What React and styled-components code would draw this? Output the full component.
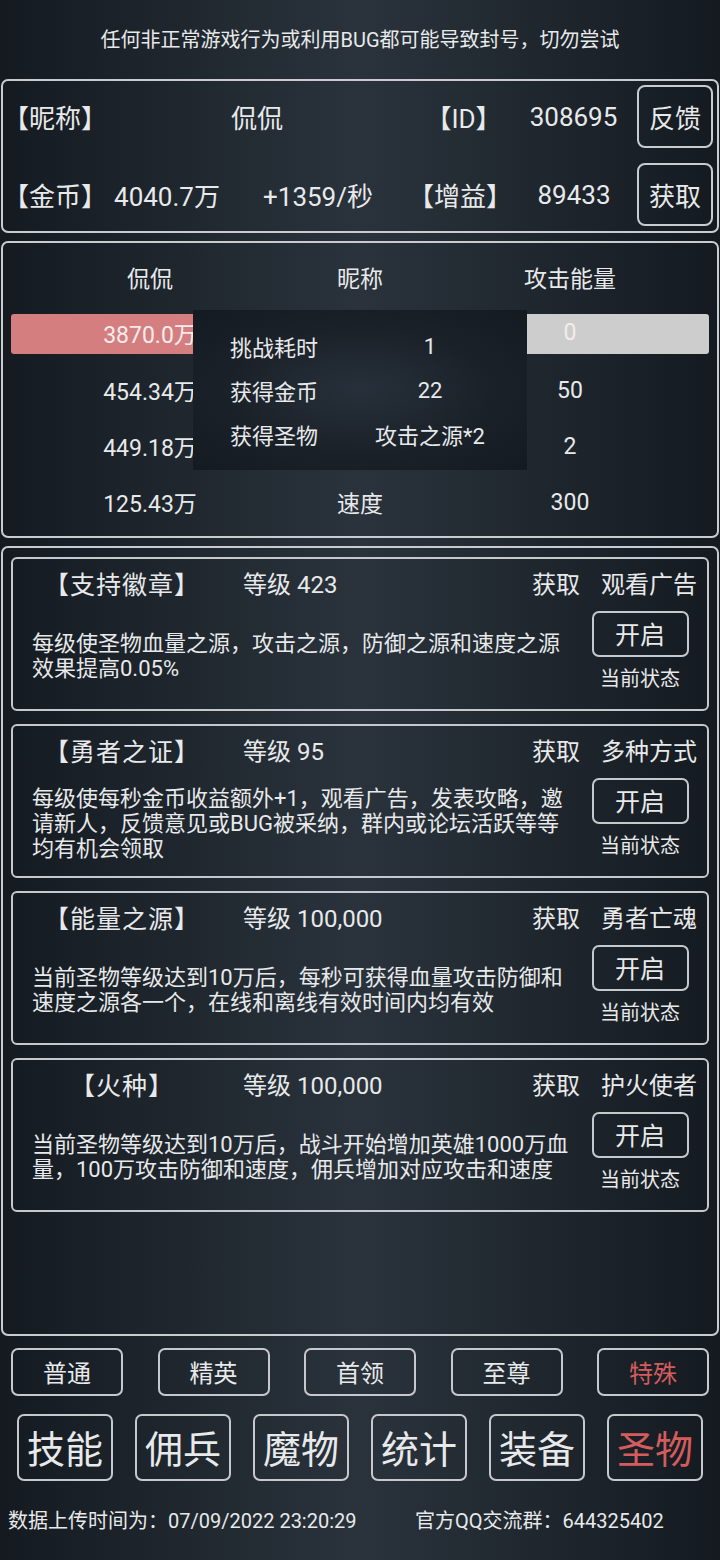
import React from "react";
import styled, { createGlobalStyle } from "styled-components";

const GlobalStyle = createGlobalStyle`
  html, body {
    margin: 0;
    padding: 0;
    background: #161c23;
  }
  * {
    box-sizing: border-box;
  }
`;

const Page = styled.div`
  width: 720px;
  min-height: 1560px;
  background: linear-gradient(to right, #141a20 0%, #2a333c 50%, #141a20 100%);
  color: #e8e9ea;
  font-family: Roboto, "Noto Sans CJK SC", sans-serif;
  display: flex;
  flex-direction: column;
`;

const Notice = styled.div`
  height: 79px;
  display: flex;
  align-items: center;
  justify-content: center;
  font-size: 20px;
  padding-bottom: 2px;
`;

const Panel = styled.div`
  position: relative;
  margin: 0 1px;
  border: 2px solid #c8ccd0;
  border-radius: 7px;
`;

const InfoPanel = styled(Panel)`
  padding: 4px 4px 5px 0;
  display: flex;
  flex-direction: column;
  gap: 15px;
`;

const InfoRow = styled.div`
  display: grid;
  grid-template-columns: ${({ $cols }) => $cols};
  align-items: center;
  height: 63px;
  font-size: 26px;
`;

const Cell = styled.div`
  text-align: center;
  white-space: nowrap;
`;

const SideButton = styled.div`
  grid-column: -2;
  justify-self: end;
  width: 76px;
  height: 63px;
  border: 2px solid #c8ccd0;
  border-radius: 8px;
  display: flex;
  align-items: center;
  justify-content: center;
  font-size: 26px;
`;

const BattlePanel = styled(Panel)`
  margin-top: 8px;
  padding: 7px 0 6px;
`;

const StatRow = styled.div`
  display: grid;
  grid-template-columns: 210px 210px 210px;
  align-items: center;
  height: 56px;
  padding-left: 42px;
  padding-bottom: ${({ $lift }) => ($lift ? 3 : 0)}px;
  font-size: 23px;
`;

const BarRow = styled.div`
  height: 56px;
  display: flex;
  align-items: center;
  padding: 0 8px;
`;

const Bar = styled.div`
  flex: 1;
  height: 40px;
  border-radius: 3px;
  background: linear-gradient(to right, #d47e80 0 50%, #cdcdcd 50% 100%);
  display: grid;
  grid-template-columns: 210px 210px 210px;
  align-items: center;
  padding-left: 34px;
  padding-bottom: 3px;
  font-size: 23px;
  color: #f4ecec;
`;

const Popup = styled.div`
  position: absolute;
  top: 67px;
  left: 190px;
  width: 334px;
  height: 160px;
  padding: 14px 0 0 37px;
  background: radial-gradient(ellipse at center, #27303a 0%, #1a2129 55%, #141a20 100%);
  display: grid;
  grid-template-columns: 135px 130px;
  grid-auto-rows: 44px;
  align-items: center;
  font-size: 22px;
`;

const PopupValue = styled.div`
  text-align: center;
  white-space: nowrap;
`;

const RelicPanel = styled(Panel)`
  margin-top: 8px;
  height: 790px;
  padding: 9px 8px;
  display: flex;
  flex-direction: column;
  gap: 13px;
`;

const Card = styled.div`
  height: 154px;
  border: 2px solid #c5c9cd;
  border-radius: 6px;
  display: grid;
  grid-template-columns: 572px 110px;
  grid-template-rows: 52px 90px;
  padding-right: 12px;
`;

const CardHead = styled.div`
  grid-column: 1 / -1;
  display: flex;
  align-items: center;
  padding-bottom: 5px;
  margin-right: -2px;
  font-size: 24px;
  white-space: nowrap;
`;

const CardTitle = styled.div`
  width: 218px;
  text-align: center;
  font-size: 25px;
  letter-spacing: 1px;
`;

const Level = styled.div`
  margin-left: 12px;
  flex: 1;
`;

const Source = styled.div`
  margin-left: 21px;
`;

const Desc = styled.div`
  align-self: center;
  padding-left: 19px;
  width: 559px;
  font-size: 22px;
  line-height: 25px;
`;

const Side = styled.div`
  display: flex;
  flex-direction: column;
  align-items: center;
`;

const OpenButton = styled.div`
  width: 97px;
  height: 46px;
  border: 2px solid #c5c9cd;
  border-radius: 7px;
  display: flex;
  align-items: center;
  justify-content: center;
  padding-bottom: 2px;
  font-size: 25px;
`;

const Status = styled.div`
  margin-top: 10px;
  font-size: 20px;
  line-height: 24px;
`;

const TabRow = styled.div`
  display: flex;
  justify-content: space-between;
  padding: 0 ${({ $pad }) => $pad}px;
  margin-top: ${({ $top }) => $top}px;
`;

const Tab = styled.div`
  width: ${({ $big }) => ($big ? 96 : 112)}px;
  height: ${({ $big }) => ($big ? 67 : 48)}px;
  border: 2px solid #c5c9cd;
  border-radius: 7px;
  display: flex;
  align-items: center;
  justify-content: center;
  padding-bottom: 2px;
  font-size: ${({ $big }) => ($big ? 38 : 24)}px;
  color: ${({ $active }) => ($active ? "#d45c5c" : "#e8e9ea")};
`;

const Footer = styled.div`
  display: flex;
  margin-top: 28px;
  padding-left: 8px;
  font-size: 20px;
  line-height: 24px;
  white-space: nowrap;
`;

const FooterItem = styled.div`
  width: ${({ $w }) => $w}px;
`;

const relics = [
  {
    title: "【支持徽章】",
    level: "423",
    source: "观看广告",
    desc: "每级使圣物血量之源，攻击之源，防御之源和速度之源效果提高0.05%",
  },
  {
    title: "【勇者之证】",
    level: "95",
    source: "多种方式",
    desc: "每级使每秒金币收益额外+1，观看广告，发表攻略，邀请新人，反馈意见或BUG被采纳，群内或论坛活跃等等均有机会领取",
  },
  {
    title: "【能量之源】",
    level: "100,000",
    source: "勇者亡魂",
    desc: "当前圣物等级达到10万后，每秒可获得血量攻击防御和速度之源各一个，在线和离线有效时间内均有效",
  },
  {
    title: "【火种】",
    level: "100,000",
    source: "护火使者",
    desc: "当前圣物等级达到10万后，战斗开始增加英雄1000万血量，100万攻击防御和速度，佣兵增加对应攻击和速度",
  },
];

const stats = [
  ["454.34万", "攻击", "50"],
  ["449.18万", "防御", "2"],
  ["125.43万", "速度", "300"],
];

const modes = ["普通", "精英", "首领", "至尊", "特殊"];
const menus = ["技能", "佣兵", "魔物", "统计", "装备", "圣物"];

export default function App() {
  return (
    <Page>
      <GlobalStyle />
      <Notice>任何非正常游戏行为或利用BUG都可能导致封号，切勿尝试</Notice>

      <InfoPanel>
        <InfoRow $cols="94px 320px 93px 127px 76px">
          <Cell>【昵称】</Cell>
          <Cell>侃侃</Cell>
          <Cell>【ID】</Cell>
          <Cell>308695</Cell>
          <SideButton>反馈</SideButton>
        </InfoRow>
        <InfoRow $cols="96px 136px 166px 118px 110px 84px">
          <Cell>【金币】</Cell>
          <Cell>4040.7万</Cell>
          <Cell>+1359/秒</Cell>
          <Cell>【增益】</Cell>
          <Cell>89433</Cell>
          <SideButton>获取</SideButton>
        </InfoRow>
      </InfoPanel>

      <BattlePanel>
        <StatRow $lift>
          <Cell>侃侃</Cell>
          <Cell>昵称</Cell>
          <Cell>攻击能量</Cell>
        </StatRow>
        <BarRow>
          <Bar>
            <Cell>3870.0万</Cell>
            <Cell>血量</Cell>
            <Cell>0</Cell>
          </Bar>
        </BarRow>
        {stats.map((s) => (
          <StatRow key={s[1]}>
            <Cell>{s[0]}</Cell>
            <Cell>{s[1]}</Cell>
            <Cell>{s[2]}</Cell>
          </StatRow>
        ))}
        <Popup>
          <div>挑战耗时</div>
          <PopupValue>1</PopupValue>
          <div>获得金币</div>
          <PopupValue>22</PopupValue>
          <div>获得圣物</div>
          <PopupValue>攻击之源*2</PopupValue>
        </Popup>
      </BattlePanel>

      <RelicPanel>
        {relics.map((r) => (
          <Card key={r.title}>
            <CardHead>
              <CardTitle>{r.title}</CardTitle>
              <Level>等级 {r.level}</Level>
              <div>获取</div>
              <Source>{r.source}</Source>
            </CardHead>
            <Desc>{r.desc}</Desc>
            <Side>
              <OpenButton>开启</OpenButton>
              <Status>当前状态</Status>
            </Side>
          </Card>
        ))}
      </RelicPanel>

      <TabRow $pad={11} $top={12}>
        {modes.map((m) => (
          <Tab key={m} $active={m === "特殊"}>
            {m}
          </Tab>
        ))}
      </TabRow>
      <TabRow $pad={17} $top={18}>
        {menus.map((m) => (
          <Tab key={m} $big $active={m === "圣物"}>
            {m}
          </Tab>
        ))}
      </TabRow>

      <Footer>
        <FooterItem $w={407}>数据上传时间为：07/09/2022 23:20:29</FooterItem>
        <FooterItem $w={280}>官方QQ交流群：644325402</FooterItem>
      </Footer>
    </Page>
  );
}
